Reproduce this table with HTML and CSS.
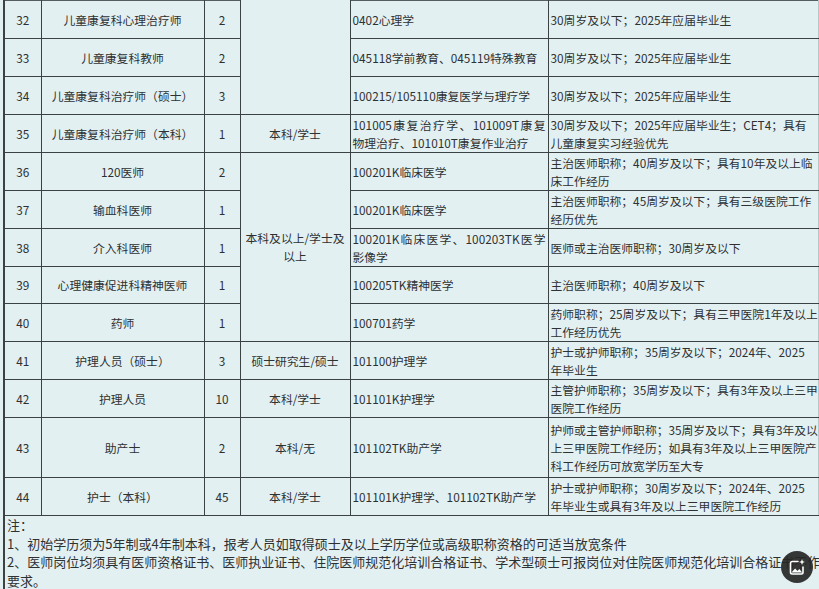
FILE: index.html
```html
<!DOCTYPE html>
<html lang="zh-CN">
<head>
<meta charset="utf-8">
<title>招聘岗位表</title>
<link rel="stylesheet" href="styles.css">
</head>
<body>
<div class="sheet">
  <table class="grid">
    <colgroup>
      <col class="c-no"><col class="c-name"><col class="c-num"><col class="c-edu"><col class="c-major"><col class="c-cond">
    </colgroup>
    <tbody>
      <tr class="r38">
        <td>32</td><td>儿童康复科心理治疗师</td><td>2</td>
        <td rowspan="3" class="edu-cont"></td>
        <td class="left">0402心理学</td>
        <td class="left">30周岁及以下；2025年应届毕业生</td>
      </tr>
      <tr class="r38">
        <td>33</td><td>儿童康复科教师</td><td>2</td>
        <td class="left">045118学前教育、045119特殊教育</td>
        <td class="left">30周岁及以下；2025年应届毕业生</td>
      </tr>
      <tr class="r38">
        <td>34</td><td>儿童康复科治疗师（硕士）</td><td>3</td>
        <td class="left">100215/105110康复医学与理疗学</td>
        <td class="left">30周岁及以下；2025年应届毕业生</td>
      </tr>
      <tr class="r38">
        <td>35</td><td>儿童康复科治疗师（本科）</td><td>1</td><td>本科/学士</td>
        <td class="left"><span class="just">101005康复治疗学、101009T康复</span><span class="line">物理治疗、101010T康复作业治疗</span></td>
        <td class="left"><span class="line">30周岁及以下；2025年应届毕业生；CET4；具有</span><span class="line">儿童康复实习经验优先</span></td>
      </tr>
      <tr class="r38">
        <td>36</td><td>120医师</td><td>2</td>
        <td rowspan="5" class="edu">本科及以上/学士及<br>以上</td>
        <td class="left">100201K临床医学</td>
        <td class="left"><span class="line">主治医师职称；40周岁及以下；具有10年及以上临</span><span class="line">床工作经历</span></td>
      </tr>
      <tr class="r38">
        <td>37</td><td>输血科医师</td><td>1</td>
        <td class="left">100201K临床医学</td>
        <td class="left"><span class="line">主治医师职称；45周岁及以下；具有三级医院工作</span><span class="line">经历优先</span></td>
      </tr>
      <tr class="r38">
        <td>38</td><td>介入科医师</td><td>1</td>
        <td class="left"><span class="just">100201K临床医学、100203TK医学</span><span class="line">影像学</span></td>
        <td class="left">医师或主治医师职称；30周岁及以下</td>
      </tr>
      <tr class="r37">
        <td>39</td><td>心理健康促进科精神医师</td><td>1</td>
        <td class="left">100205TK精神医学</td>
        <td class="left">主治医师职称；40周岁及以下</td>
      </tr>
      <tr class="r38">
        <td>40</td><td>药师</td><td>1</td>
        <td class="left">100701药学</td>
        <td class="left"><span class="line">药师职称；25周岁及以下；具有三甲医院1年及以上</span><span class="line">工作经历优先</span></td>
      </tr>
      <tr class="r38">
        <td>41</td><td>护理人员（硕士）</td><td>3</td><td>硕士研究生/硕士</td>
        <td class="left">101100护理学</td>
        <td class="left"><span class="line">护士或护师职称；35周岁及以下；2024年、2025</span><span class="line">年毕业生</span></td>
      </tr>
      <tr class="r38">
        <td>42</td><td>护理人员</td><td>10</td><td>本科/学士</td>
        <td class="left">101101K护理学</td>
        <td class="left"><span class="line">主管护师职称；35周岁及以下；具有3年及以上三甲</span><span class="line">医院工作经历</span></td>
      </tr>
      <tr class="r60">
        <td>43</td><td>助产士</td><td>2</td><td>本科/无</td>
        <td class="left">101102TK助产学</td>
        <td class="left"><span class="line">护师或主管护师职称；35周岁及以下；具有3年及以</span><span class="line">上三甲医院工作经历；如具有3年及以上三甲医院产</span><span class="line">科工作经历可放宽学历至大专</span></td>
      </tr>
      <tr class="r38">
        <td>44</td><td>护士（本科）</td><td>45</td><td>本科/学士</td>
        <td class="left">101101K护理学、101102TK助产学</td>
        <td class="left"><span class="line">护士或护师职称；30周岁及以下；2024年、2025</span><span class="line">年毕业生或具有3年及以上三甲医院工作经历</span></td>
      </tr>
    </tbody>
  </table>
  <div class="notes">
    <p>注：</p>
    <p>1、初始学历须为5年制或4年制本科，报考人员如取得硕士及以上学历学位或高级职称资格的可适当放宽条件</p>
    <p>2、医师岗位均须具有医师资格证书、医师执业证书、住院医师规范化培训合格证书、学术型硕士可报岗位对住院医师规范化培训合格证书不作</p>
    <p>要求。</p>
  </div>
</div>
<div class="fab" aria-label="图片">
  <svg width="18" height="18" viewBox="0 0 18 18" fill="none">
    <path d="M10 3.5H4.2A1.7 1.7 0 0 0 2.5 5.2v9.1A1.7 1.7 0 0 0 4.2 16h9.1A1.7 1.7 0 0 0 15 14.3V9" stroke="#fff" stroke-width="1.6" stroke-linecap="round"/>
    <path d="M3.5 14.6l3.6-4.1 2.4 2.4 1.8-1.8 2.9 3.5z" fill="#fff"/>
    <path d="M14 1l.8 2.2L17 4l-2.2.8L14 7l-.8-2.2L11 4l2.2-.8z" fill="#fff"/>
  </svg>
</div>
</body>
</html>
```

FILE: styles.css
```css
html, body {
  margin: 0;
  padding: 0;
  width: 819px;
  height: 589px;
  overflow: hidden;
  background: #e3f0f2;
}

body {
  position: relative;
  font-family: "Noto Sans CJK SC", "Noto Sans", sans-serif;
  color: #2e3132;
}

.sheet {
  margin-left: 3px;
  width: 816px;
  height: 589px;
  border-left: 2px solid #3a4244;
  box-sizing: border-box;
}

.grid {
  width: 813px;
  border-collapse: collapse;
  table-layout: fixed;
  font-size: 11.8px;
}

.c-no { width: 36px; }
.c-name { width: 163px; }
.c-num { width: 36px; }
.c-edu { width: 110px; }
.c-major { width: 198px; }
.c-cond { width: 270px; }

.grid td {
  border: 1px solid #3a4244;
  padding: 0 2px;
  text-align: center;
  vertical-align: middle;
  line-height: 18px;
  white-space: nowrap;
  overflow: hidden;
}

.grid tr:first-child td { border-top-color: #555d5f; }
.grid td:first-child { border-left: none; }
.grid td:last-child { border-right-color: #b9c6c8; }
.grid td.edu-cont { border-top: none; }

.r38 { height: 38px; }
.r37 { height: 37px; }
.r60 { height: 60px; }

.grid td.left { text-align: left; }

.line { display: block; }

.just {
  display: block;
  text-align: justify;
  text-align-last: justify;
}

.notes {
  padding: 0 0 0 2px;
  font-size: 13px;
  line-height: 18.7px;
  white-space: nowrap;
  overflow: hidden;
}

.notes p { margin: 0; }

.fab {
  position: absolute;
  left: 781px;
  top: 551px;
  width: 32px;
  height: 32px;
  border-radius: 50%;
  background: rgba(38, 38, 38, 0.92);
  display: flex;
  align-items: center;
  justify-content: center;
}
```
